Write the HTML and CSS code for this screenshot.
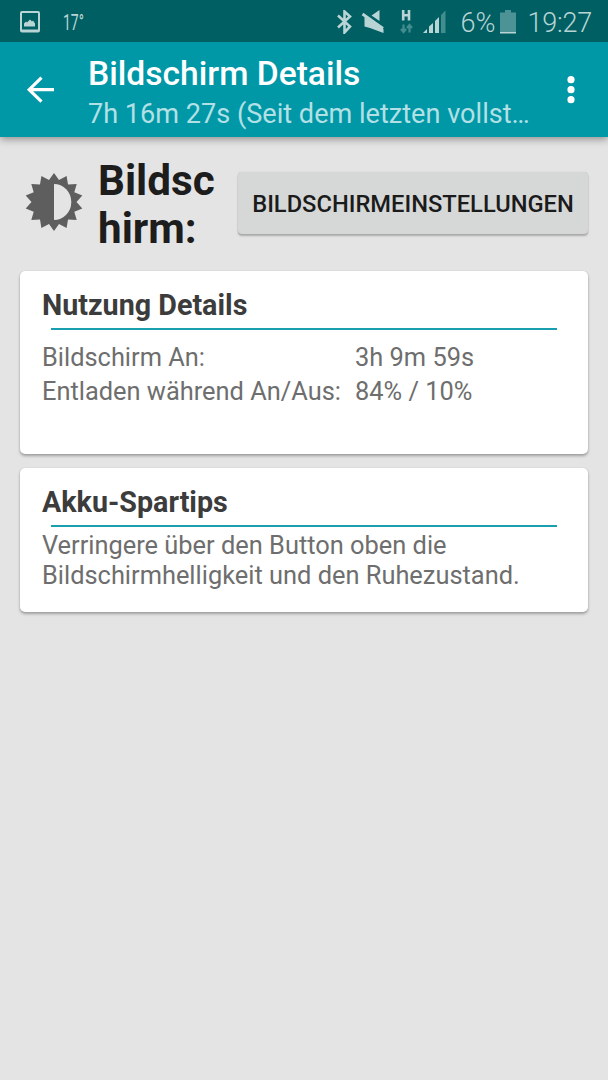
FILE: index.html
```html
<!DOCTYPE html>
<html lang="de">

<head>
    <meta charset="UTF-8">
    <meta name="viewport" content="width=device-width, initial-scale=1.0">
    <title>Bildschirm Details</title>
    <link rel="stylesheet" href="styles.css">
</head>

<body>
    <div class="statusbar">
        <svg class="picture" width="20" height="22" viewBox="0 0 20 22">
            <rect x="1" y="1" width="18" height="19.5" rx="1" fill="none" stroke="#b9d4d5" stroke-width="2" />
            <path d="M1 18.500h18v2H1zM4 15.500v-3l2-2 1 1 3-3 2 2 1-1 2 3v3z" fill="#b9d4d5" />
        </svg>
        <span class="temp">17°</span>
        <svg class="system" width="126" height="24" viewBox="336 10 126 24">
            <path d="M338 15.500l12 11-5.500 6V11.500l5.500 5-12 11" fill="none" stroke="#b9d4d5" stroke-width="2.6" />
            <path d="M364.500 17l19 12v4l-13.500-5-5.500-1.500zM371.500 15.500l8-5.500v11z" fill="#b9d4d5" />
            <path d="M362.500 14l20.500 14.500" stroke="#b9d4d5" stroke-width="2.800" />
            <path d="M403.200 10v10.500M409 10v10.500M403 15.300h6" fill="none" stroke="#b9d4d5" stroke-width="2.600" />
            <path d="M403.500 24.500v7.500M401 29l2.500 3 2.500-3M409.500 32.500v-7.500M407 28l2.500-3 2.500 3" fill="none" stroke="#438d8f" stroke-width="2.200" />
            <path d="M423 33l4-4v4zM429 26.500l4-3.500v10h-4zM435 21l4-4v16h-4z" fill="#b9d4d5" />
            <path d="M441 15l4.500-4.500v22.500H441z" fill="#438d8f" />
        </svg>
        <span class="percent">6%</span>
        <svg class="battery" width="16" height="24" viewBox="0 0 16 24">
            <path d="M5 0h6v2.500h5v20.500H0V2.500h5z" fill="#4d9395" />
            <path d="M0 22h16v1.500H0z" fill="#b9d4d5" />
        </svg>
        <span class="clock">19:27</span>
    </div>

    <header class="toolbar">
        <svg class="back" width="30" height="28" viewBox="0 0 30 28">
            <path d="M28 13.700H3M15.500 1.700L3.200 13.700l12.300 12" fill="none" stroke="#fff" stroke-width="3.200" />
        </svg>
        <div class="titles">
            <h1>Bildschirm Details</h1>
            <p>7h 16m 27s (Seit dem letzten vollst…</p>
        </div>
        <svg class="more" width="8" height="28" viewBox="0 0 8 28" fill="#fff">
            <circle cx="4" cy="3.700" r="3.600" />
            <circle cx="4" cy="13.700" r="3.600" />
            <circle cx="4" cy="23.700" r="3.600" />
        </svg>
    </header>

    <main>
        <div class="intro">
            <svg class="brightness" width="60" height="60" viewBox="-30 -30 60 60">
                <path fill="#5e5e5e" d="M0-29L5-21.900 12.600-26.100 14-17.600 22.700-18.100 20.300-9.800 28.300-6.500 22.500 0 28.300 6.500 20.300 9.800 22.700 18.100 14 17.600 12.600 26.100 5 21.900 0 29-5 21.900-12.600 26.100-14 17.600-22.700 18.100-20.300 9.800-28.300 6.500-22.500 0-28.300-6.500-20.300-9.800-22.700-18.100-14-17.600-12.600-26.100-5-21.900z" />
                <path fill="#e4e4e4" d="M0-18a17.300 18 0 0 1 0 36z" />
            </svg>
            <h2>Bildsc<br>hirm:</h2>
            <button type="button">BILDSCHIRMEINSTELLUNGEN</button>
        </div>

        <section class="card usage">
            <h3>Nutzung Details</h3>
            <hr>
            <dl>
                <dt>Bildschirm An:</dt>
                <dd>3h 9m 59s</dd>
                <dt>Entladen während An/Aus:</dt>
                <dd>84% / 10%</dd>
            </dl>
        </section>

        <section class="card tips">
            <h3>Akku-Spartips</h3>
            <hr>
            <p>Verringere über den Button oben die Bildschirmhelligkeit und den Ruhezustand.</p>
        </section>
    </main>
</body>

</html>
```
FILE: styles.css
```css
* {
    box-sizing: border-box;
    margin: 0;
    padding: 0;
}

body {
    height: 100vh;
    background: #e4e4e4;
    font-family: Roboto, "Liberation Sans", sans-serif;
    overflow: hidden;
}

.statusbar {
    position: relative;
    z-index: 1;
    display: flex;
    align-items: center;
    height: 42px;
    padding: 2px 16px 0 20px;
    background: #005f62;
    color: #b9d4d5;
    font-size: 27px;
    font-weight: 300;
    white-space: nowrap;
}

.temp {
    margin-left: 23px;
    font-size: 22.500px;
    font-weight: 400;
    transform: scaleX(.62);
    transform-origin: left;
}

.system {
    margin-left: auto;
    margin-right: -2px;
}

.percent,
.clock {
    padding-top: 2px;
}

.battery {
    margin: 0 11px 0 5px;
}

.clock {
    letter-spacing: -.200px;
}

.toolbar {
    display: flex;
    align-items: center;
    height: 95px;
    padding: 0 33px 0 26px;
    background: #0097a7;
    color: #fff;
    box-shadow: 0 2px 8px rgba(0, 0, 0, .4);
}

.titles {
    margin-left: 32px;
    padding-top: 8px;
}

.titles h1 {
    font-size: 33.600px;
    font-weight: 500;
    line-height: 40px;
}

.titles p {
    color: #b2e0e5;
    font-size: 27.100px;
    line-height: 40px;
    white-space: nowrap;
}

.more {
    margin-left: auto;
}

main {
    padding: 20px;
}

.intro {
    display: flex;
    align-items: center;
    height: 94px;
    margin-bottom: 20px;
    padding-left: 4px;
}

.brightness {
    margin-bottom: 4px;
}

.intro h2 {
    margin-left: 14px;
    padding-top: 1px;
    color: #1d1d1d;
    font-size: 42.200px;
    font-weight: 700;
    line-height: 47.500px;
}

.intro button {
    width: 350px;
    height: 62px;
    margin-bottom: 2px;
    margin-left: auto;
    padding-top: 2px;
    border: 0;
    border-radius: 4px;
    background: #d6d8d7;
    box-shadow: 0 2px 2px rgba(0, 0, 0, .25), 0 0 1px rgba(0, 0, 0, .2);
    color: #1b1b1b;
    font-family: inherit;
    font-size: 23.700px;
    font-weight: 500;
}

.card {
    padding: 17px 31px 0 22px;
    border-radius: 5px;
    background: #fff;
    box-shadow: 0 2px 3px rgba(0, 0, 0, .3), 0 0 1px rgba(0, 0, 0, .2);
    color: #6e6e6e;
    font-size: 25.400px;
}

.card h3 {
    color: #3c3c3c;
    font-size: 28.700px;
    font-weight: 700;
    line-height: 34px;
}

.card hr {
    height: 2px;
    margin: 6px 0 0 9px;
    border: 0;
    background: #1a9fae;
}

.usage {
    height: 183px;
    margin-bottom: 14px;
}

.usage dl {
    display: grid;
    grid-template-columns: 313px 1fr;
    margin-top: 10px;
    line-height: 34px;
    white-space: nowrap;
}

.tips {
    height: 144px;
}

.tips p {
    margin-top: 3px;
    line-height: 30px;
}
```
